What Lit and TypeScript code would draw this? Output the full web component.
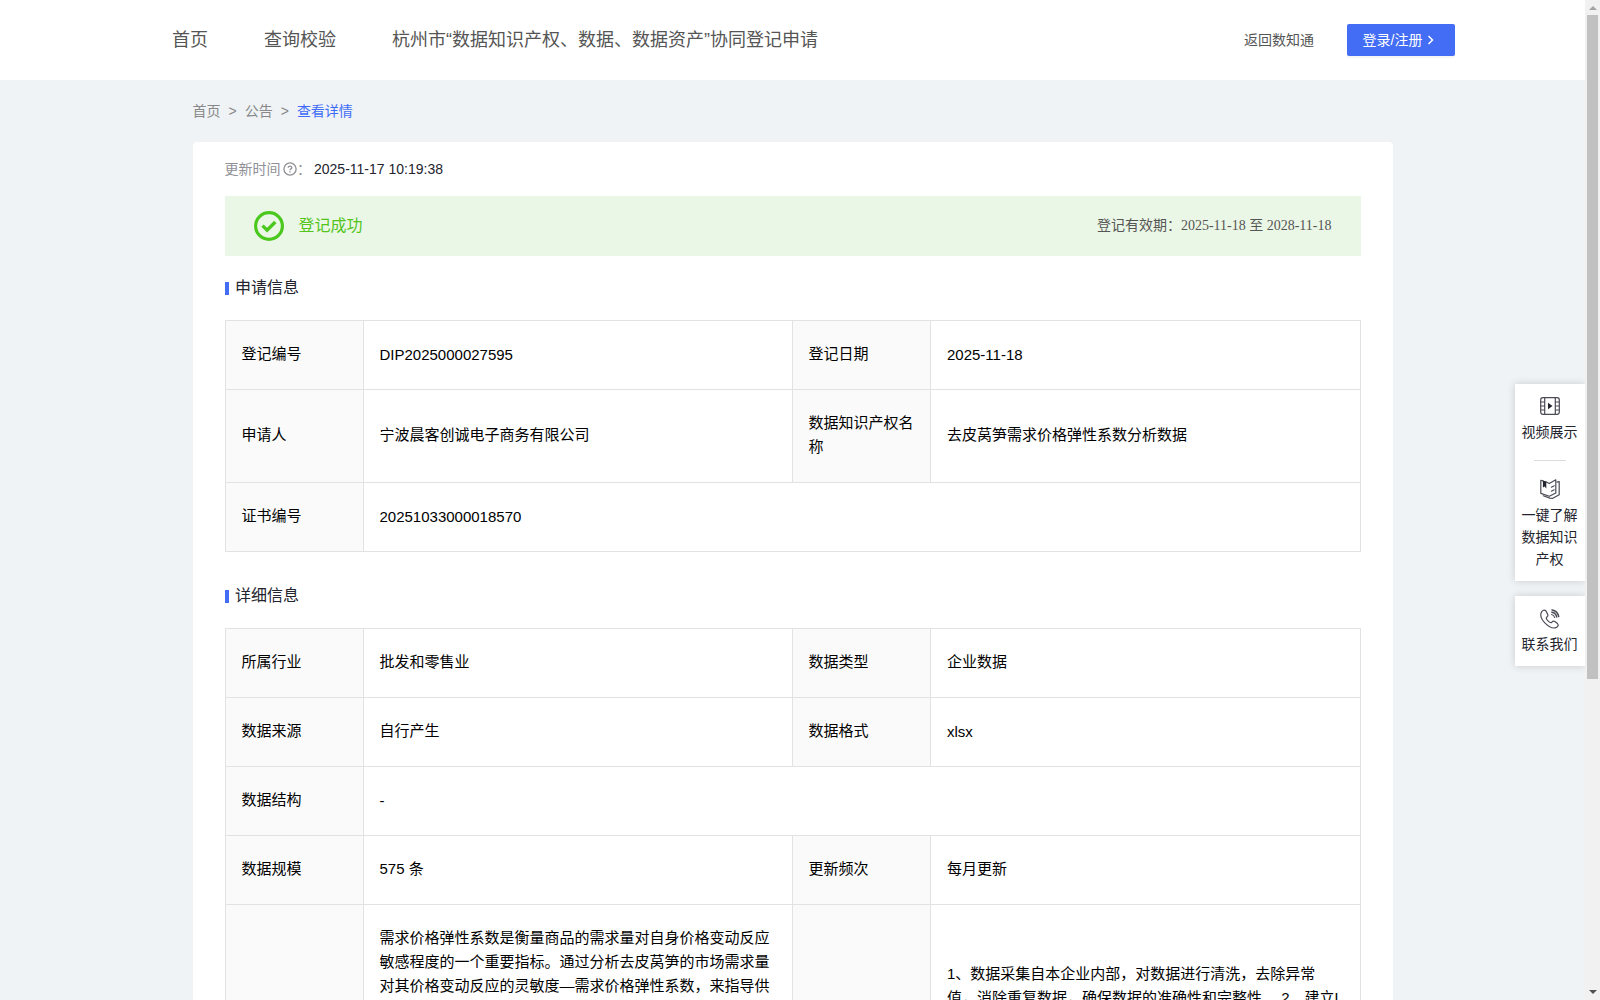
import { LitElement, html, css, svg, nothing } from "lit";
import { customElement, property } from "lit/decorators.js";

type Cell = { label: string; value: string };
type Row = { cells: Cell[]; offset?: boolean };

const applyRows: Row[] = [
  { cells: [{ label: "登记编号", value: "DIP2025000027595" }, { label: "登记日期", value: "2025-11-18" }] },
  { cells: [{ label: "申请人", value: "宁波晨客创诚电子商务有限公司" }, { label: "数据知识产权名称", value: "去皮莴笋需求价格弹性系数分析数据" }] },
  { cells: [{ label: "证书编号", value: "20251033000018570" }] },
];

const detailRows: Row[] = [
  { cells: [{ label: "所属行业", value: "批发和零售业" }, { label: "数据类型", value: "企业数据" }] },
  { cells: [{ label: "数据来源", value: "自行产生" }, { label: "数据格式", value: "xlsx" }] },
  { cells: [{ label: "数据结构", value: "-" }] },
  { cells: [{ label: "数据规模", value: "575 条" }, { label: "更新频次", value: "每月更新" }] },
  {
    offset: true,
    cells: [
      { label: "", value: "需求价格弹性系数是衡量商品的需求量对自身价格变动反应敏感程度的一个重要指标。通过分析去皮莴笋的市场需求量对其价格变动反应的灵敏度—需求价格弹性系数，来指导供" },
      { label: "", value: "1、数据采集自本企业内部，对数据进行清洗，去除异常值，消除重复数据，确保数据的准确性和完整性。 2、建立L" },
    ],
  },
];

const isLatin = (text: string) => /^[\x20-\x7e]+$/.test(text);

@customElement("info-table")
class InfoTable extends LitElement {
  @property({ attribute: false }) rows: Row[] = [];
  static styles = css`
    :host { display: block; border: solid #e2e2e2; border-width: 1px 0 0 1px; color: #000; }
    .row { display: grid; grid-template-columns: 138px 429px 138px 430px; }
    .cell { box-sizing: border-box; border: solid #e2e2e2; border-width: 0 1px 1px 0; padding: 21px 16px 23px 15.5px; display: flex; align-items: center; font-size: 15px; line-height: 24px; background: #fff; }
    .label { background: #fafafa; }
    .wide { grid-column: 2 / -1; }
    .latin { padding-top: 22px; padding-bottom: 22px; }
    .late { padding-left: 16px; }
    .tall .cell { align-items: flex-start; height: 260px; }
    .tall .late { padding-top: 57px; }
  `;
  render() {
    return this.rows.map(
      (r) => html`<div class="row ${r.offset ? "tall" : ""}">
        ${r.cells.map(
          (c, i) => html`<div class="cell label">${c.label || nothing}</div>
            <div class="cell ${r.cells.length === 1 ? "wide" : ""} ${i === 1 ? "late" : ""} ${isLatin(c.value) ? "latin" : ""}">${c.value}</div>`
        )}
      </div>`
    );
  }
}

const videoIcon = svg`<svg width="20" height="18" viewBox="0 0 20 18" fill="none" stroke="#4a4b55" stroke-width="1.2">
  <rect x=".7" y=".7" width="18.6" height="16.6" rx="2.2"/><path d="M4.700 .7v16.600M15.300 .7v16.600M.7 5h4M.7 9h4M.7 13h4M15.300 5h4M15.300 9h4M15.300 13h4"/><path d="M8 5.800v6.400l4.500-3.200z" fill="#23242e" stroke="none"/></svg>`;
const bookIcon = svg`<svg width="20" height="20" viewBox="0 0 20 20" fill="none" stroke="#4a4b55" stroke-width="1.2" stroke-linejoin="round" stroke-linecap="round">
  <path d="M6.300 2.900 9.300 4.600 15.800.8v13.200L9.300 17.300.8 14.400V1.400L3 1.900"/><path d="M17 3.100l2.200-.6v13.300l-6.400 3.500-3-.2-6.500-2.300"/><path d="M11.400 8.200l2.800-1.400M11.400 12.200l2.800-1.400"/><path d="M2.900 1.400v7.200l1.700-1.100L6.300 9.500V2.600z" fill="#23242e" stroke="none"/></svg>`;
const phoneIcon = svg`<svg width="20" height="20" viewBox="0 0 20 20" fill="none" stroke="#4a4b55" stroke-width="1.2" stroke-linecap="round" stroke-linejoin="round">
  <path d="M5.800 1.700C4.400.6 2.600 1.300 1.600 2.900-.2 6.100 1.600 10.500 5.100 14.100c3.600 3.600 8.100 5.900 11.300 4.300 1.800-1 2.300-2.600 1.100-3.800l-2.600-2c-1.300-.9-2.300-.2-3.200.7-.8.8-2.100.1-3.700-1.500S5.900 9.100 6.700 8.300c1-.9 1.700-1.900.9-3.200z"/><path d="M11.600 5.500c1.600.3 2.700 1.400 3 3" /><path d="M12 .9c3.500.6 6.100 3.200 6.700 6.700M11.800 3.200c2.700.4 4.400 2.100 4.900 4.700" stroke-width="1.5"/></svg>`;

@customElement("app-root")
class AppRoot extends LitElement {
  static styles = css`
    :host { display: block; position: relative; width: 1600px; height: 1000px; overflow: hidden; background: #eff3f6;
      font-family: "Liberation Sans", "Noto Sans CJK SC", sans-serif; color: #23242e; }
    .page { width: 1585px; height: 1000px; overflow: hidden; }
    .header { height: 80px; background: #fff; display: flex; align-items: center; padding: 0 130px 0 172px; box-sizing: border-box; color: #555; white-space: nowrap; }
    .nav { display: flex; gap: 56px; font-size: 18px; line-height: 28px; flex: 1; }
    .back { font-size: 14px; line-height: 22px; margin-right: 33px; padding-bottom: 1px; }
    .login { box-sizing: border-box; width: 108px; height: 32px; padding: 0 0 1px 15.5px; border-radius: 2px; background: #436df5; color: #fff; font-size: 14px; line-height: 30px; display: flex; align-items: center; gap: 5px; box-shadow: 0 2px 0 rgba(0,0,0,.04); }
    .crumbs { display: flex; gap: 8px; padding: 19.5px 0 0 192.5px; height: 42.5px; font-size: 14px; line-height: 22px; color: #888; }
    .current { color: #3f6cf6; }
    .card { width: 1200px; box-sizing: border-box; margin-left: 193px; background: #fff; border-radius: 4px; padding: 16px 32px 0; height: 1000px; }
    .updated { display: flex; align-items: center; height: 22px; font-size: 14px; line-height: 22px; color: #909096; }
    .updated > span { margin-top: -1px; }
    .updated > .before { margin-left: -.5px; margin-right: .5px; }
    .updated > .stamp { color: #23242e; margin-left: 3px; }
    .banner { margin-top: 16px; height: 60px; padding: 0 29px; background: #ebf7e6; display: flex; align-items: center; }
    .ok { flex: 1; margin-left: 14.5px; padding-bottom: 1px; font-size: 16px; line-height: 24px; color: #52c41a; }
    .valid { font-family: "Liberation Serif", "Noto Sans CJK SC", serif; font-size: 14px; line-height: 22px; color: #555; white-space: pre; padding: 0 .5px 1px 0; }
    .title { display: flex; align-items: center; gap: 6px; height: 24px; font-size: 16px; line-height: 24px; margin: 20px 0; }
    .title.second { margin: 32px 0 20px; }
    .bar { width: 4px; height: 13px; background: #436df5; margin-top: 1px; }
    .side { position: absolute; right: 15px; top: 384px; width: 70px; display: flex; flex-direction: column; gap: 15px; font-size: 14px; line-height: 22px; text-align: center; }
    .panel { background: #fff; box-shadow: 0 0 8px rgba(0,0,0,.16); clip-path: inset(-10px 0 -10px -10px); display: flex; flex-direction: column; align-items: center; box-sizing: border-box; }
    .help { height: 197px; padding-top: 13px; }
    .contact { height: 70px; padding-top: 13px; }
    .panel p { margin: 6px 0 0; width: 58px; padding-right: 1px; }
    .help .intro { margin-top: 5px; }
    .contact p { margin-top: 4px; }
    .rule { width: 32px; height: 1px; background: #ddd; margin: 17px 0 18px; }
    .scroll { position: absolute; right: 0; top: 0; width: 15px; height: 1000px; background: #f1f1f1; display: flex; flex-direction: column; align-items: center; }
    .up { border: 4px solid transparent; border-top: 0; border-bottom-color: #a3a3a3; margin: 6px 0 5px; }
    .thumb { width: 11px; height: 664px; background: #c1c1c1; }
    .down { border: 4px solid transparent; border-bottom: 0; border-top-color: #505050; margin: auto 0 6px; }
    svg { display: block; flex: none; }
  `;
  render() {
    return html`
      <div class="page">
        <div class="header">
          <div class="nav"><span>首页</span><span>查询校验</span><span>杭州市“数据知识产权、数据、数据资产”协同登记申请</span></div>
          <span class="back">返回数知通</span>
          <div class="login"><span>登录/注册</span><svg width="8" height="10" viewBox="0 0 8 10" fill="none" stroke="#fff" stroke-width="1.5"><path d="M1.500 1 5.500 5 1.500 9"/></svg></div>
        </div>
        <div class="crumbs"><span>首页</span><span>&gt;</span><span>公告</span><span>&gt;</span><span class="current">查看详情</span></div>
        <div class="card">
          <div class="updated"><span class="before">更新时间</span>
            <svg width="16" height="16" viewBox="0 0 16 16" fill="none" stroke="#909096" stroke-width="1.300"><circle cx="9" cy="8" r="6.100"/><path d="M7.200 6.700c0-2.200 3.600-2.200 3.600 0 0 1.200-1.800 1.200-1.800 2.500M9 10.200v1.300"/></svg>
            <span>：</span><span class="stamp">2025-11-17 10:19:38</span></div>
          <div class="banner">
            <svg width="30" height="30" viewBox="0 0 30 30" fill="none" stroke="#4bc81e"><circle cx="15" cy="15" r="13.400" stroke-width="3.200"/><path d="M8.500 14.600l4.600 4.600 8.200-8.200" stroke-width="3.400"/></svg>
            <span class="ok">登记成功</span>
            <span class="valid">登记有效期：2025-11-18 至 2028-11-18</span>
          </div>
          <div class="title"><i class="bar"></i><span>申请信息</span></div>
          <info-table .rows=${applyRows}></info-table>
          <div class="title second"><i class="bar"></i><span>详细信息</span></div>
          <info-table .rows=${detailRows}></info-table>
        </div>
      </div>
      <div class="side">
        <div class="panel help">${videoIcon}<p>视频展示</p><i class="rule"></i>${bookIcon}<p class="intro">一键了解数据知识产权</p></div>
        <div class="panel contact">${phoneIcon}<p>联系我们</p></div>
      </div>
      <div class="scroll"><i class="up"></i><i class="thumb"></i><i class="down"></i></div>
    `;
  }
}
